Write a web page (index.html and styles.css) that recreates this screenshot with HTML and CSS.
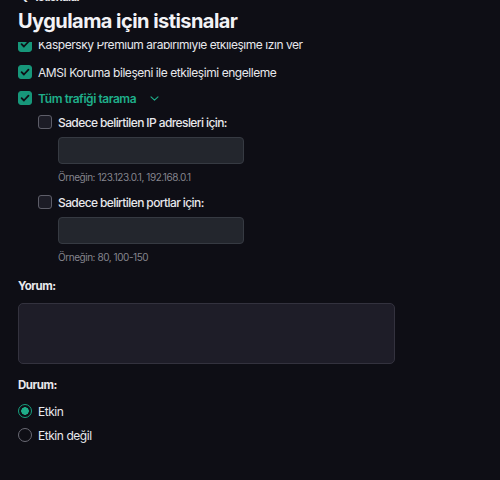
FILE: index.html
```html
<!DOCTYPE html>
<html lang="tr">
<head>
<meta charset="utf-8">
<link rel="stylesheet" href="styles.css">
</head>
<body>
<div class="header">
  <div class="back"><span class="back-arrow">&lsaquo;</span><span>İstisnalar</span></div>
  <h1 class="title">Uygulama için istisnalar</h1>
</div>
<div class="scroll">
  <div class="content">
    <label class="check-row first">
      <span class="cb checked"><svg viewBox="0 0 14 14" width="14" height="14"><path d="M3.6 7.2l2.3 2.3 4.6-4.8" fill="none" stroke="#0e0e15" stroke-width="1.8" stroke-linecap="round" stroke-linejoin="round"/></svg></span>
      <span class="cb-text">Kaspersky Premium arabirimiyle etkileşime izin ver</span>
    </label>
    <label class="check-row">
      <span class="cb checked"><svg viewBox="0 0 14 14" width="14" height="14"><path d="M3.6 7.2l2.3 2.3 4.6-4.8" fill="none" stroke="#0e0e15" stroke-width="1.8" stroke-linecap="round" stroke-linejoin="round"/></svg></span>
      <span class="cb-text">AMSI Koruma bileşeni ile etkileşimi engelleme</span>
    </label>
    <label class="check-row">
      <span class="cb checked"><svg viewBox="0 0 14 14" width="14" height="14"><path d="M3.6 7.2l2.3 2.3 4.6-4.8" fill="none" stroke="#0e0e15" stroke-width="1.8" stroke-linecap="round" stroke-linejoin="round"/></svg></span>
      <span class="cb-text accent">Tüm trafiği tarama</span>
      <svg class="chev" viewBox="0 0 9 5" width="9" height="5"><path d="M1 0.8l3.5 3.4 3.5-3.4" fill="none" stroke="#1fae8a" stroke-width="1.1" stroke-linecap="round" stroke-linejoin="round"/></svg>
    </label>
    <div class="sub">
      <label class="check-row sub-row">
        <span class="cb"></span>
        <span class="cb-text strong">Sadece belirtilen IP adresleri için:</span>
      </label>
      <div class="field"><div class="input"></div><div class="hint">Örneğin: 123.123.0.1, 192.168.0.1</div></div>
      <label class="check-row sub-row">
        <span class="cb"></span>
        <span class="cb-text strong">Sadece belirtilen portlar için:</span>
      </label>
      <div class="field"><div class="input"></div><div class="hint">Örneğin: 80, 100-150</div></div>
    </div>
    <div class="section">
      <div class="label">Yorum:</div>
      <div class="textarea"></div>
    </div>
    <div class="section status">
      <div class="label">Durum:</div>
      <div class="radio-row"><span class="radio on"></span><span class="cb-text">Etkin</span></div>
      <div class="radio-row"><span class="radio"></span><span class="cb-text">Etkin değil</span></div>
    </div>
  </div>
</div>
</body>
</html>
```
FILE: styles.css
```css
* { box-sizing: border-box; }
html, body { margin: 0; padding: 0; }
body {
  width: 500px;
  height: 480px;
  overflow: hidden;
  background: #0e0e15;
  color: #e8e8ec;
  font-family: Inter, "Noto Sans", sans-serif;
  font-size: 12px;
  letter-spacing: -0.45px;
}
.header {
  height: 42px;
  padding: 0 18px;
  overflow: hidden;
  display: flex;
  flex-direction: column;
}
.back {
  margin-top: -10px;
  height: 14px;
  display: flex;
  align-items: center;
  gap: 8px;
  font-size: 11px;
  font-weight: 700;
  color: #e8e8ec;
}
.back-arrow { padding-left: 4px; font-size: 14px; }
.title {
  margin: 4px 0 0;
  font-size: 20px;
  font-weight: 700;
  line-height: 26px;
  letter-spacing: -0.55px;
  color: #f2f2f5;
}
.scroll {
  height: 438px;
  overflow: hidden;
}
.content {
  padding: 0 18px;
  display: flex;
  flex-direction: column;
}
.check-row {
  display: flex;
  align-items: center;
  gap: 6px;
  height: 26px;
}
.check-row.first { margin-top: -12px; height: 29px; }
.cb {
  width: 14px;
  height: 14px;
  flex: none;
  border-radius: 3px;
  border: 1.5px solid #5d5d68;
  background: #1c1c26;
  display: flex;
}
.cb.checked { background: #17977a; border-color: #17977a; }
.cb.checked svg { margin: -1.5px; }
.cb-text { white-space: nowrap; }
.accent { color: #1fae8a; font-weight: 600; }
.strong { font-weight: 500; letter-spacing: -0.6px; }
.chev { margin-left: 8px; }
.sub { padding-left: 20px; display: flex; flex-direction: column; }
.sub-row { height: 22px; }
.field { padding-left: 20px; padding-top: 4px; padding-bottom: 7px; }
.input {
  width: 186px;
  height: 27px;
  background: #23262d;
  border: 1px solid #363a42;
  border-radius: 4px;
}
.hint {
  margin-top: 6px;
  font-size: 10px;
  color: #85858d;
  line-height: 14px;
  letter-spacing: -0.45px;
}
.section { display: flex; flex-direction: column; margin-top: 7px; }
.label { font-weight: 700; font-size: 11.5px; line-height: 16px; }
.textarea {
  margin-top: 9px;
  width: 377px;
  height: 61px;
  background: #1e1d28;
  border: 1px solid #33323e;
  border-radius: 5px;
}
.status { margin-top: 13px; }
.radio-row { display: flex; align-items: center; gap: 6px; height: 24px; }
.status .label { margin-bottom: 6px; }
.radio {
  width: 14px;
  height: 14px;
  flex: none;
  border-radius: 50%;
  border: 1.5px solid #6a6a74;
}
.radio.on {
  border: 1.5px solid #17a07f;
  background: radial-gradient(circle, #1fae8a 0 3.5px, transparent 4px);
}
```
